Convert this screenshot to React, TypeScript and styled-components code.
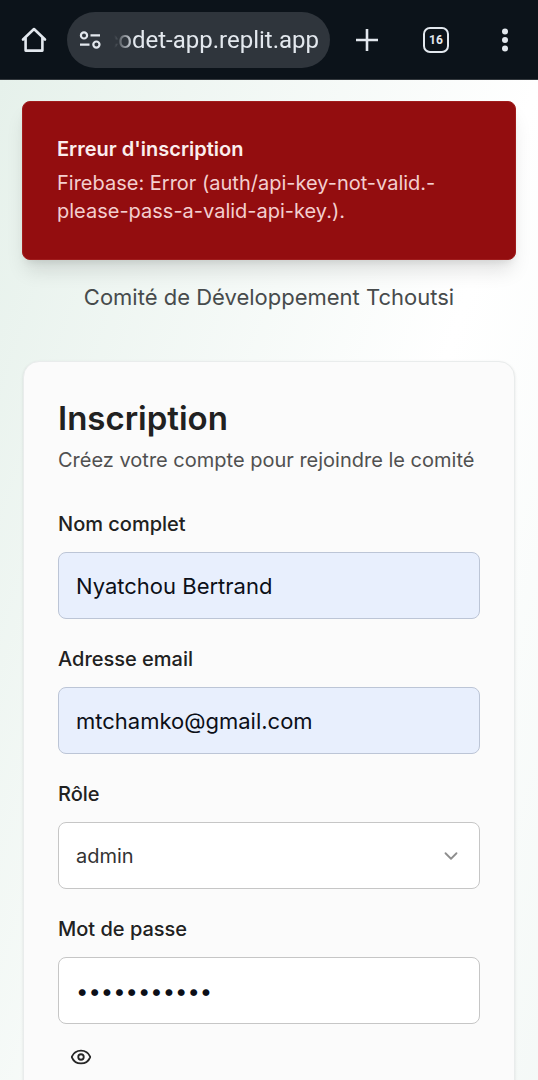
import React, { useState } from "react";
import styled, { createGlobalStyle } from "styled-components";
import { ChevronDown, Eye, EyeOff } from "lucide-react";

const GlobalStyle = createGlobalStyle`
  *, *::before, *::after { box-sizing: border-box; }
  body { margin: 0; font-family: Inter, "Liberation Sans", sans-serif; color: #212121; }
  button, input, select { font: inherit; color: inherit; margin: 0; }
`;

const Screen = styled.div`
  height: 100vh;
  display: flex;
  flex-direction: column;
  overflow: hidden;
`;

const BrowserBar = styled.header`
  flex: none;
  height: 80px;
  display: flex;
  align-items: center;
  padding: 0 19px 0 20px;
  background: #0c131a;
  border-bottom: 1px solid #33383d;
`;

const BarButton = styled.button`
  flex: none;
  width: 28px;
  height: 28px;
  display: grid;
  place-items: center;
  padding: 0;
  border: 0;
  background: none;
  color: #e3e8ee;
`;

const AddressPill = styled.div`
  flex: 1;
  min-width: 0;
  height: 56px;
  display: flex;
  align-items: center;
  gap: 12px;
  margin: 0 23px 0 19px;
  padding: 0 11px;
  border-radius: 28px;
  background: #2f353c;
  color: #e3e8ee;
`;

const Address = styled.div`
  flex: 1;
  min-width: 0;
  display: flex;
  justify-content: flex-end;
  font-family: Roboto, sans-serif;
  font-size: 24px;
  line-height: 32px;
  white-space: nowrap;
  mask-image: linear-gradient(to right, transparent, #000 20px);
`;

const BarActions = styled.nav`
  display: flex;
  align-items: center;
  gap: 41px;
`;

const Page = styled.main`
  flex: 1;
  min-height: 0;
  overflow: hidden;
  padding: 21px 22px 0;
  background: linear-gradient(to bottom right, #e6f1eb, #ffffff 50%, #eef5f2) 0 0 / 100% 150vh no-repeat;
`;

const Toast = styled.section`
  padding: 33px 34px 34px;
  border: 1px solid #a01c1c;
  border-radius: 8px;
  background: #930d0f;
  color: #fbeeee;
  box-shadow: 0 14px 20px -4px rgba(0, 0, 0, 0.12), 0 5px 8px -4px rgba(0, 0, 0, 0.1);
  font-size: 20px;
  line-height: 28px;
`;

const ToastTitle = styled.h2`
  margin: 0 0 6px;
  font-size: 20px;
  line-height: 28px;
  font-weight: 600;
`;

const ToastText = styled.p`
  margin: 0;
  color: #f3cfcf;
`;

const Tagline = styled.p`
  margin: 21px 0 48px;
  text-align: center;
  font-size: 22px;
  line-height: 32px;
  color: #474b4c;
`;

const Card = styled.section`
  margin: 0 1px;
  padding: 34px;
  border: 1px solid #e9ecec;
  border-radius: 16px;
  background: #fbfbfb;
  box-shadow: 0 1px 3px rgba(0, 0, 0, 0.1);
`;

const CardTitle = styled.h1`
  margin: 0 0 6px;
  font-size: 33px;
  line-height: 44px;
  font-weight: 600;
`;

const CardText = styled.p`
  margin: 0 0 36px;
  font-size: 20px;
  line-height: 28px;
  color: #505050;
`;

const Form = styled.form`
  display: grid;
  gap: 26px;
`;

const Field = styled.div`
  display: grid;
  gap: 14px;
`;

const Label = styled.label`
  font-size: 20px;
  line-height: 28px;
  font-weight: 500;
`;

const Input = styled.input<{ $autofilled?: boolean }>`
  width: 100%;
  height: 67px;
  padding: 0 17px;
  border: 1px solid ${(p) => (p.$autofilled ? "#bcc5d6" : "#c6c6c6")};
  border-radius: 8px;
  background: ${(p) => (p.$autofilled ? "#e8effd" : "#ffffff")};
  color: #0c0f18;
  font-size: 22px;
`;

const SelectBox = styled.div`
  display: grid;
  align-items: center;

  > * { grid-area: 1 / 1; }

  svg {
    justify-self: end;
    margin-right: 18px;
    pointer-events: none;
    color: #8e8e8e;
  }
`;

const Select = styled.select`
  appearance: none;
  width: 100%;
  height: 67px;
  padding: 0 17px;
  border: 1px solid #c6c6c6;
  border-radius: 8px;
  background: #ffffff;
  color: #333333;
  font-size: 20px;
`;

const RevealButton = styled.button`
  justify-self: start;
  height: 38px;
  display: grid;
  place-items: center;
  padding: 0 12px;
  border: 0;
  background: none;
  color: #262626;
`;

const HomeIcon = () => (
  <svg width="26" height="28" viewBox="0 0 26 28" fill="none" stroke="currentColor" strokeWidth="2.6" strokeLinejoin="round" strokeLinecap="round">
    <path d="M2 13.5 13 3l11 10.5M4.6 12v12.6h16.8V12" />
  </svg>
);

const SiteInfoIcon = () => (
  <svg width="24" height="20" viewBox="0 0 24 20" fill="none" stroke="currentColor" strokeWidth="2.2">
    <circle cx="6" cy="5.4" r="3.1" />
    <path d="M12.5 5.4H22M2 14.6h9.5" />
    <circle cx="18.4" cy="14.6" r="3.1" />
  </svg>
);

const PlusIcon = () => (
  <svg width="24" height="24" viewBox="0 0 24 24" fill="none" stroke="currentColor" strokeWidth="2.6">
    <path d="M12 1v22M1 12h22" />
  </svg>
);

const DotsIcon = () => (
  <svg width="8" height="24" viewBox="0 0 8 24" fill="currentColor">
    <circle cx="4" cy="3.4" r="3" />
    <circle cx="4" cy="12" r="3" />
    <circle cx="4" cy="20.6" r="3" />
  </svg>
);

const TabCount = styled.span`
  width: 26px;
  height: 26px;
  display: grid;
  place-items: center;
  border: 2px solid currentColor;
  border-radius: 7px;
  font-family: Roboto, sans-serif;
  font-size: 12px;
  line-height: 12px;
  font-weight: 700;
`;

export default function App() {
  const [name, setName] = useState("Nyatchou Bertrand");
  const [email, setEmail] = useState("mtchamko@gmail.com");
  const [role, setRole] = useState("admin");
  const [password, setPassword] = useState("motdepasse1");
  const [visible, setVisible] = useState(false);

  return (
    <Screen>
      <GlobalStyle />
      <BrowserBar>
        <BarButton aria-label="Accueil"><HomeIcon /></BarButton>
        <AddressPill>
          <SiteInfoIcon />
          <Address>codet-app.replit.app</Address>
        </AddressPill>
        <BarActions>
          <BarButton aria-label="Nouvel onglet"><PlusIcon /></BarButton>
          <BarButton aria-label="Onglets"><TabCount>16</TabCount></BarButton>
          <BarButton aria-label="Menu"><DotsIcon /></BarButton>
        </BarActions>
      </BrowserBar>
      <Page>
        <Toast role="alert">
          <ToastTitle>Erreur d'inscription</ToastTitle>
          <ToastText>Firebase: Error (auth/api-key-not-valid.-please-pass-a-valid-api-key.).</ToastText>
        </Toast>
        <Tagline>Comité de Développement Tchoutsi</Tagline>
        <Card>
          <CardTitle>Inscription</CardTitle>
          <CardText>Créez votre compte pour rejoindre le comité</CardText>
          <Form>
            <Field>
              <Label htmlFor="name">Nom complet</Label>
              <Input id="name" $autofilled value={name} onChange={(e) => setName(e.target.value)} />
            </Field>
            <Field>
              <Label htmlFor="email">Adresse email</Label>
              <Input id="email" type="email" $autofilled value={email} onChange={(e) => setEmail(e.target.value)} />
            </Field>
            <Field>
              <Label htmlFor="role">Rôle</Label>
              <SelectBox>
                <Select id="role" value={role} onChange={(e) => setRole(e.target.value)}>
                  <option>admin</option>
                  <option>membre</option>
                </Select>
                <ChevronDown size={22} />
              </SelectBox>
            </Field>
            <Field>
              <Label htmlFor="password">Mot de passe</Label>
              <Input
                id="password"
                type={visible ? "text" : "password"}
                value={password}
                onChange={(e) => setPassword(e.target.value)}
              />
              <RevealButton type="button" aria-label="Afficher le mot de passe" onClick={() => setVisible(!visible)}>
                {visible ? <EyeOff size={22} /> : <Eye size={22} />}
              </RevealButton>
            </Field>
          </Form>
        </Card>
      </Page>
    </Screen>
  );
}
